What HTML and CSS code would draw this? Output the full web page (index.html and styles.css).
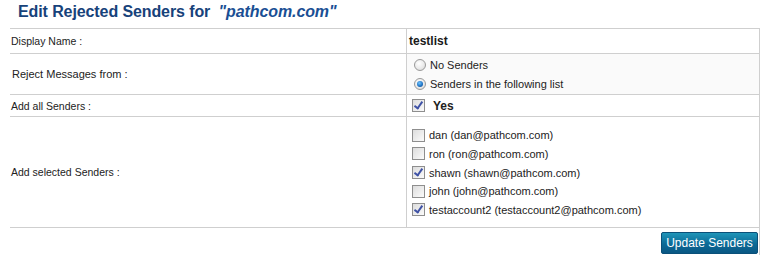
FILE: index.html
```html
<!DOCTYPE html>
<html lang="en">
<head>
  <meta charset="UTF-8">
  <title>Edit Rejected Senders</title>
  <link rel="stylesheet" href="styles.css">
</head>
<body>
  <div class="page">
    <div class="title">Edit Rejected Senders for <em>"pathcom.com"</em></div>
    <table class="form">
      <tr class="row-name">
        <td class="label">Display Name :</td>
        <td class="value"><b class="name">testlist</b></td>
      </tr>
      <tr class="row-reject">
        <td class="label big">Reject Messages from :</td>
        <td class="value shaded">
          <div class="options">
            <div class="option"><span class="radio"></span>No Senders</div>
            <div class="option"><span class="radio on"></span>Senders in the following list</div>
          </div>
        </td>
      </tr>
      <tr class="row-all">
        <td class="label">Add all Senders :</td>
        <td class="value">
          <div class="option yes"><span class="check on"></span><b>Yes</b></div>
        </td>
      </tr>
      <tr class="row-selected">
        <td class="label">Add selected Senders :</td>
        <td class="value">
          <div class="senders">
            <div class="sender"><span class="check"></span>dan (dan@pathcom.com)</div>
            <div class="sender"><span class="check"></span>ron (ron@pathcom.com)</div>
            <div class="sender"><span class="check on"></span>shawn (shawn@pathcom.com)</div>
            <div class="sender"><span class="check"></span>john (john@pathcom.com)</div>
            <div class="sender"><span class="check on"></span>testaccount2 (testaccount2@pathcom.com)</div>
          </div>
        </td>
      </tr>
      <tr class="row-actions">
        <td colspan="2"><button class="button">Update Senders</button></td>
      </tr>
    </table>
  </div>
</body>
</html>
```

FILE: styles.css
```css
body {
  margin: 0;
  font-family: "Liberation Sans", Arial, sans-serif;
  color: #222;
  background: #fff;
}

.page {
  width: 761px;
}

.title {
  height: 28px;
  overflow: hidden;
  padding-left: 18px;
  font-size: 16px;
  line-height: 23px;
  font-weight: bold;
  color: #17427a;
  letter-spacing: -0.1px;
}

.title em {
  margin-left: 4px;
  color: #1a4f94;
}

.form {
  margin-left: 10px;
  width: 750px;
  border-collapse: collapse;
  border-spacing: 0;
}

.form td {
  border-top: 1px solid #cfcfcf;
  padding: 0;
  vertical-align: middle;
}

.label {
  width: 394px;
  padding-left: 1px !important;
  font-size: 10.5px;
}

.label.big {
  font-size: 11px;
  padding-left: 2px !important;
}

.value {
  border-left: 1px solid #cfcfcf;
  border-right: 1px solid #cfcfcf;
  font-size: 11px;
}

.shaded {
  background: #fafafa;
}

.row-name td {
  height: 24px;
}

.name {
  margin-left: 2px;
  font-size: 12px;
  color: #1a1a1a;
}

.row-reject td {
  height: 40px;
}

.options {
  padding: 1px 0 1px 7px;
}

.option {
  display: flex;
  align-items: center;
  height: 19px;
}

.row-all td {
  height: 21px;
}

.row-all .value .option {
  padding-left: 5px;
}

.yes b {
  font-size: 12px;
  margin-left: 2px;
}

.row-selected td {
  height: 110px;
}

.senders {
  padding: 1px 0 0 5px;
}

.sender {
  display: flex;
  align-items: center;
  height: 18.6px;
}

.radio {
  width: 10px;
  height: 10px;
  border: 1px solid #9a9a9a;
  border-radius: 50%;
  background: radial-gradient(circle at 40% 35%, #fff 0, #e8e8e8 60%, #cfcfcf 100%);
  margin-right: 4px;
  position: relative;
}

.radio.on::after {
  content: "";
  position: absolute;
  left: 2px;
  top: 2px;
  width: 6px;
  height: 6px;
  border-radius: 50%;
  background: radial-gradient(circle at 40% 35%, #6fc3ff 0, #1c6fc0 60%, #0b3f7a 100%);
}

.check {
  width: 11px;
  height: 11px;
  border: 1px solid #8e8e8e;
  background: linear-gradient(135deg, #dcdcdc, #fbfbfb);
  margin-right: 4px;
  position: relative;
}

.check.on::after {
  content: "";
  position: absolute;
  left: 3px;
  top: 0px;
  width: 3px;
  height: 7px;
  border: solid #3f52a6;
  border-width: 0 2px 2px 0;
  transform: rotate(35deg);
}

.yes .check {
  margin-right: 6px;
}

.row-actions td {
  height: 27px;
  border-right: 1px solid #cfcfcf;
  text-align: right;
  padding-right: 1px;
}

.button {
  width: 97px;
  height: 22px;
  margin-top: 2px;
  padding: 0;
  border: 1px solid #0b5079;
  border-radius: 2px;
  background: linear-gradient(#1f95b8, #0c6a96 55%, #0a5783);
  color: #fff;
  font-family: "Liberation Sans", Arial, sans-serif;
  font-size: 12px;
  cursor: pointer;
}
```
